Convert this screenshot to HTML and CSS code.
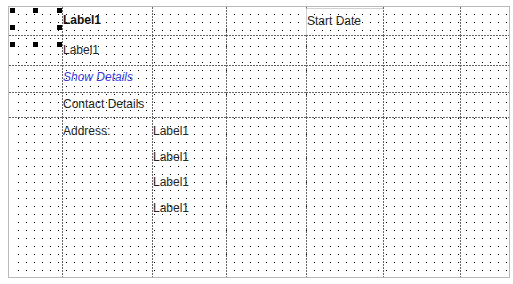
FILE: index.html
```html
<!DOCTYPE html>
<html>
<head>
<meta charset="utf-8">
<link rel="stylesheet" href="styles.css">
</head>
<body>
<div class="surface">
  <div class="grid">
    <div class="cell"></div>
    <div class="cell r1"><span class="lbl bold">Label1</span></div>
    <div class="cell"></div>
    <div class="cell"></div>
    <div class="cell r1 sel"><span class="lbl">Start Date</span></div>
    <div class="cell"></div>
    <div class="cell"></div>

    <div class="cell"></div>
    <div class="cell r2"><span class="lbl">Label1</span></div>
    <div class="cell"></div>
    <div class="cell"></div>
    <div class="cell"></div>
    <div class="cell"></div>
    <div class="cell"></div>

    <div class="cell"></div>
    <div class="cell r3"><span class="lbl link">Show Details</span></div>
    <div class="cell"></div>
    <div class="cell"></div>
    <div class="cell"></div>
    <div class="cell"></div>
    <div class="cell"></div>

    <div class="cell"></div>
    <div class="cell r4"><span class="lbl">Contact Details</span></div>
    <div class="cell"></div>
    <div class="cell"></div>
    <div class="cell"></div>
    <div class="cell"></div>
    <div class="cell"></div>

    <div class="cell"></div>
    <div class="cell r5"><span class="lbl">Address:</span></div>
    <div class="cell r5 stack">
      <span class="lbl">Label1</span>
      <span class="lbl">Label1</span>
      <span class="lbl">Label1</span>
      <span class="lbl">Label1</span>
    </div>
    <div class="cell"></div>
    <div class="cell"></div>
    <div class="cell"></div>
    <div class="cell"></div>
  </div>
  <span class="handle h-tl"></span>
  <span class="handle h-tc"></span>
  <span class="handle h-tr"></span>
  <span class="handle h-ml"></span>
  <span class="handle h-mr"></span>
  <span class="handle h-bl"></span>
  <span class="handle h-bc"></span>
  <span class="handle h-br"></span>
</div>
</body>
</html>
```
FILE: styles.css
```css
html, body {
  margin: 0;
  padding: 0;
  background: #fff;
}

.surface {
  position: relative;
  box-sizing: border-box;
  width: 502px;
  height: 272px;
  margin: 6px 0 0 8px;
  border: 1px solid #b9b9b9;
  background:
    linear-gradient(#fff, #fff) 0 0 / 9px 100% no-repeat,
    conic-gradient(from 270deg at 1px 1px, #000 90deg, transparent 0) 1px 7px / 8px 8px,
    #fff;
  font-family: "Liberation Sans", Arial, sans-serif;
  font-size: 12px;
  line-height: 16px;
  color: #262626;
}

.grid {
  display: grid;
  grid-template-columns: 53px 90px 74px 80px 77px 77px 1fr;
  grid-template-rows: 28px 30px 27px 25px 1fr;
  height: 100%;
}

.cell {
  min-width: 0;
  background-image:
    repeating-linear-gradient(to bottom, #666 0 2px, transparent 2px 3px),
    repeating-linear-gradient(to right, #666 0 2px, transparent 2px 3px);
  background-size: 1px 100%, 100% 1px;
  background-position: left top, left top;
  background-repeat: no-repeat;
  padding-left: 1px;
}

.cell:nth-child(7n+1) {
  background-image:
    none,
    repeating-linear-gradient(to right, #666 0 2px, transparent 2px 3px);
}

.cell:nth-child(-n+7) {
  background-image:
    repeating-linear-gradient(to bottom, #666 0 2px, transparent 2px 3px),
    none;
}

.cell:nth-child(1) {
  background-image: none;
}

.lbl {
  display: block;
  white-space: nowrap;
}

.bold {
  font-weight: bold;
  color: #111;
}

.link {
  font-style: italic;
  color: #3b3bdc;
}

.r1 { padding-top: 5px; }
.r2 { padding-top: 7px; }
.r3 { padding-top: 4px; }
.r4 { padding-top: 4px; }
.r5 { padding-top: 6px; }

.sel .lbl {
  margin-top: -4px;
  padding-top: 4px;
  height: 22px;
  border-top: 1px solid #d2d2d2;
  border-left: 1px solid #d2d2d2;
  border-top-left-radius: 2px;
  margin-left: -1px;
}

.stack {
  display: flex;
  flex-direction: column;
  gap: 9.5px;
}

.handle {
  position: absolute;
  width: 5px;
  height: 5px;
  background: #000;
}

.h-tl { left: 1px; top: 1px; }
.h-tc { left: 24px; top: 1px; }
.h-tr { left: 48px; top: 1px; }
.h-ml { left: 1px; top: 18px; }
.h-mr { left: 48px; top: 18px; }
.h-bl { left: 1px; top: 35px; }
.h-bc { left: 24px; top: 35px; }
.h-br { left: 48px; top: 35px; }
```
